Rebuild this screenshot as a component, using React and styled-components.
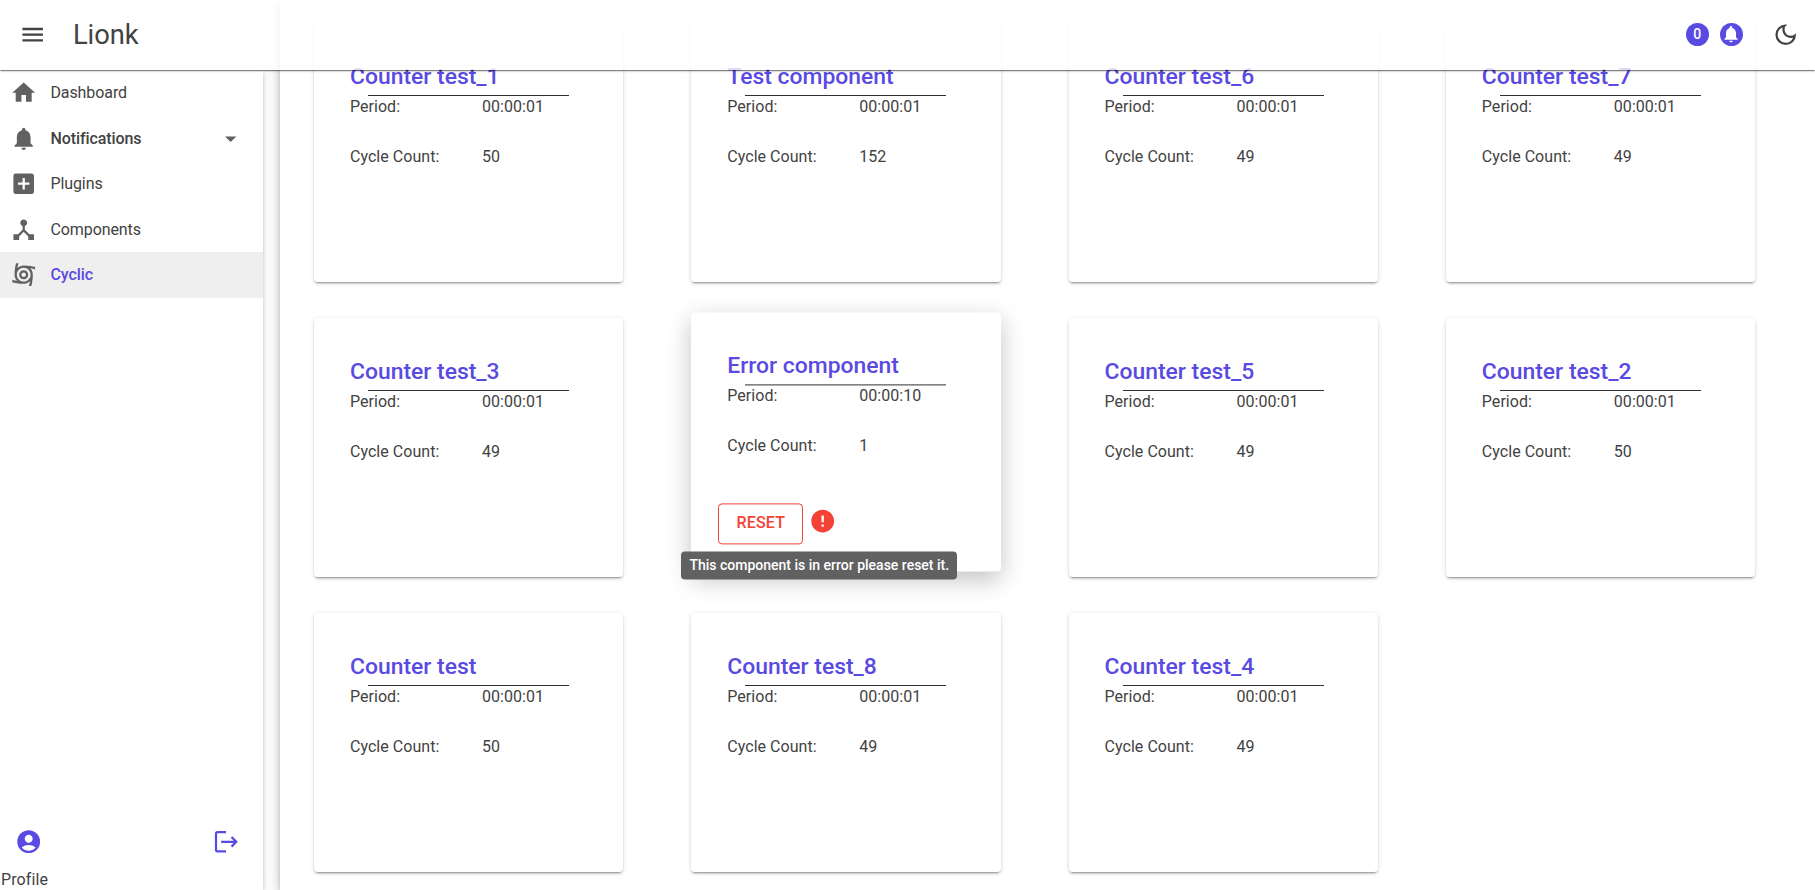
import React from 'react';
import styled, { createGlobalStyle } from 'styled-components';
import {
  MdMenu, MdHome, MdNotifications, MdAddBox, MdDeviceHub, MdCyclone,
  MdArrowDropDown, MdError, MdAccountCircle, MdOutlineDarkMode,
} from 'react-icons/md';

const primary = '#594ae2';
const text = '#424242';
const error = '#f44336';

const GlobalStyle = createGlobalStyle`
  *, *::before, *::after { box-sizing: border-box; }
  body {
    margin: 0;
    background: #fff;
    color: ${text};
    font: 400 16px/24px Roboto, "Liberation Sans", sans-serif;
    overflow: hidden;
  }
`;

const Page = styled.div`
  position: relative;
  display: flex;
  height: 890px;
  overflow: hidden;
`;

const AppBar = styled.header`
  position: absolute;
  inset: 0 0 auto 0;
  z-index: 5;
  display: flex;
  align-items: center;
  height: 70px;
  padding: 0 16px 1px 18.5px;
  background: rgba(255, 255, 255, 0.8);
  box-shadow: 0 2px 1px -1px rgba(0, 0, 0, 0.3), 0 1px 1px 0 rgba(0, 0, 0, 0.2),
    0 1px 3px 0 rgba(0, 0, 0, 0.12);
`;

const Brand = styled.h1`
  flex: 1;
  margin: 0 0 0 27px;
  font-size: 27.3px;
  font-weight: 400;
  line-height: 36px;
`;

const Glyph = styled.span`
  display: flex;
  font-size: ${(p) => p.$size || 27.4}px;
  color: ${(p) => p.$color || 'inherit'};
  svg { display: block; }
`;

const Tools = styled.div`
  display: flex;
  align-items: center;
`;

const Chip = styled.span`
  display: flex;
  align-items: center;
  justify-content: center;
  width: 23px;
  height: 23px;
  margin-right: 11px;
  border-radius: 50%;
  background: ${primary};
  color: #fff;
  font-size: 14px;
  font-weight: 500;
  line-height: 20px;
  padding-bottom: ${(p) => (p.$lifted ? 1 : 0)}px;
`;

const ThemeToggle = styled.div`
  margin-left: 18px;
`;

const Sidebar = styled.aside`
  display: flex;
  flex-direction: column;
  flex: none;
  width: 262.6px;
  margin-top: 70.2px;
  box-shadow: 0 3px 3px -2px rgba(0, 0, 0, 0.2), 0 3px 4px 0 rgba(0, 0, 0, 0.14),
    0 1px 8px 0 rgba(0, 0, 0, 0.12);
`;

const Nav = styled.nav`
  flex: 1;
`;

const NavItem = styled.a`
  display: flex;
  align-items: center;
  height: 45.5px;
  padding: 0 18.5px 0 9.5px;
  background: ${(p) => (p.$active ? '#efefef' : 'transparent')};
  color: ${(p) => (p.$active ? primary : text)};
  font-weight: ${(p) => (p.$strong || p.$active ? 500 : 400)};
`;

const NavLabel = styled.span`
  flex: 1;
  margin-left: 13.5px;
  padding-top: 0.6px;
  letter-spacing: -0.08px;
`;

const Account = styled.footer`
  display: flex;
  align-items: center;
  justify-content: space-between;
  padding: 0 25px 0 14.5px;
`;

const Profile = styled.div`
  height: 34.5px;
  padding: 12px 0 0 1px;
  line-height: 24px;
  letter-spacing: 0.1px;
`;

const Gutter = styled.div`
  flex: none;
  width: 17.4px;
`;

const Main = styled.main`
  flex: 1;
  padding: 23px 0 0 34px;
  background: #fff;
  box-shadow: 0 3px 5px -1px rgba(0, 0, 0, 0.2), 0 6px 10px 0 rgba(0, 0, 0, 0.14),
    0 1px 18px 0 rgba(0, 0, 0, 0.12);
`;

const Grid = styled.div`
  display: grid;
  grid-template-columns: repeat(4, 309.4px);
  grid-auto-rows: 259px;
  gap: 36px 67.9px;
`;

const Card = styled.article`
  position: relative;
  padding: 36px;
  border-radius: 4px;
  background: #fff;
  transform: ${(p) => (p.$raised ? 'translateY(-5.6px)' : 'none')};
  box-shadow: ${(p) =>
    p.$raised
      ? '0 8px 24px rgba(0, 0, 0, 0.24)'
      : '0 3px 1px -2px rgba(0, 0, 0, 0.2), 0 2px 2px 0 rgba(0, 0, 0, 0.14), 0 1px 5px 0 rgba(0, 0, 0, 0.12)'};
`;

const Title = styled.h2`
  margin: 0;
  color: ${primary};
  font-size: 22.9px;
  font-weight: 500;
  line-height: 36px;
  white-space: nowrap;
`;

const Rule = styled.hr`
  width: 201px;
  height: 1px;
  margin: 0 0 -1px 18px;
  border: 0;
  background: #303030;
`;

const Field = styled.div`
  display: flex;
  margin-bottom: 25.6px;
  line-height: 24px;
  letter-spacing: 0.04px;

  &:first-of-type { margin-top: -0.2px; }
`;

const FieldName = styled.span`
  width: 132px;
`;

const ErrorBar = styled.div`
  display: flex;
  align-items: center;
  gap: 6px;
  margin: 45px 0 0 -9px;
`;

const ErrorMark = styled.span`
  padding-bottom: 5px;
`;

const ResetButton = styled.button`
  width: 85px;
  height: 41px;
  padding: 0;
  border: 1px solid ${error};
  border-radius: 4px;
  background: transparent;
  color: ${error};
  font: 500 16px/24px Roboto, sans-serif;
  letter-spacing: 0.2px;
`;

const Tooltip = styled.div`
  position: absolute;
  top: 239px;
  left: -10px;
  width: 276px;
  height: 28px;
  border-radius: 4px;
  background: #616161;
  color: #fff;
  font-size: 14px;
  font-weight: 500;
  line-height: 28px;
  text-align: center;
  white-space: nowrap;
`;

const LogoutIcon = () => (
  <svg width="24" height="24" viewBox="0 0 24 24" fill="none" stroke="currentColor" strokeWidth="2.2">
    <path d="M12 2.2H3.5Q2 2.2 2 3.7v16.1q0 1.5 1.5 1.5H12M7.2 11.8h15M17.5 7l4.8 4.8-4.8 4.8" />
  </svg>
);

const navItems = [
  { label: 'Dashboard', icon: <MdHome /> },
  { label: 'Notifications', icon: <MdNotifications />, strong: true, expandable: true },
  { label: 'Plugins', icon: <MdAddBox /> },
  { label: 'Components', icon: <MdDeviceHub /> },
  { label: 'Cyclic', icon: <MdCyclone />, active: true },
];

const components = [
  { name: 'Counter test_1', count: 50 },
  { name: 'Test component', count: 152 },
  { name: 'Counter test_6', count: 49 },
  { name: 'Counter test_7', count: 49 },
  { name: 'Counter test_3', count: 49 },
  { name: 'Error component', count: 1, period: '00:00:10', failed: true },
  { name: 'Counter test_5', count: 49 },
  { name: 'Counter test_2', count: 50 },
  { name: 'Counter test', count: 50 },
  { name: 'Counter test_8', count: 49 },
  { name: 'Counter test_4', count: 49 },
];

function ComponentCard({ name, count, period = '00:00:01', failed }) {
  return (
    <Card $raised={failed}>
      <Title>{name}</Title>
      <Rule />
      <Field><FieldName>Period:</FieldName><span>{period}</span></Field>
      <Field><FieldName>Cycle Count:</FieldName><span>{count}</span></Field>
      {failed && (
        <>
          <ErrorBar>
            <ResetButton>RESET</ResetButton>
            <ErrorMark><Glyph $color={error}><MdError /></Glyph></ErrorMark>
          </ErrorBar>
          <Tooltip>This component is in error please reset it.</Tooltip>
        </>
      )}
    </Card>
  );
}

export default function App() {
  return (
    <Page>
      <GlobalStyle />
      <AppBar>
        <Glyph><MdMenu /></Glyph>
        <Brand>Lionk</Brand>
        <Tools>
          <Chip $lifted>0</Chip>
          <Chip><Glyph $size={20}><MdNotifications /></Glyph></Chip>
          <ThemeToggle><Glyph><MdOutlineDarkMode /></Glyph></ThemeToggle>
        </Tools>
      </AppBar>
      <Sidebar>
        <Nav>
          {navItems.map((item) => (
            <NavItem key={item.label} $active={item.active} $strong={item.strong}>
              <Glyph $color="#616161">{item.icon}</Glyph>
              <NavLabel>{item.label}</NavLabel>
              {item.expandable && <Glyph $color="#616161"><MdArrowDropDown /></Glyph>}
            </NavItem>
          ))}
        </Nav>
        <Account>
          <Glyph $color={primary}><MdAccountCircle /></Glyph>
          <Glyph $color={primary}><LogoutIcon /></Glyph>
        </Account>
        <Profile>Profile</Profile>
      </Sidebar>
      <Gutter />
      <Main>
        <Grid>
          {components.map((c) => <ComponentCard key={c.name} {...c} />)}
        </Grid>
      </Main>
    </Page>
  );
}
